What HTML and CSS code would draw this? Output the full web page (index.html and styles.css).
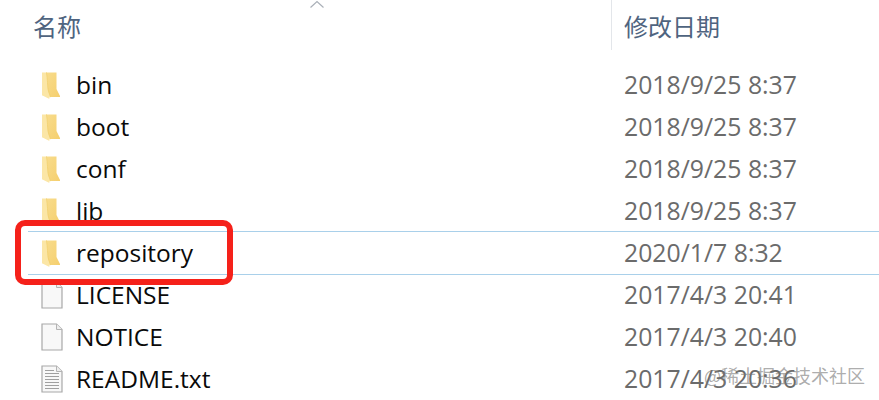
FILE: index.html
```html
<!DOCTYPE html>
<html lang="zh">
<head>
<meta charset="utf-8">
<title>文件列表</title>
<link rel="stylesheet" href="styles.css">
</head>
<body>
<svg class="defs" width="0" height="0" aria-hidden="true">
  <defs>
    <linearGradient id="fg" x1="0" y1="0" x2="1" y2="1">
      <stop offset="0" stop-color="#f8dc8c"/>
      <stop offset="1" stop-color="#f5cf6e"/>
    </linearGradient>
    <symbol id="folder" viewBox="0 0 20 28">
      <path d="M5 1.500H15.500V18L19 25V26H5Z" fill="url(#fg)"/>
      <path d="M1 1.500H5.500C6.500 8 6.500 16 7 20L9.500 26.500H8L8.500 28L1.500 24.500H1Z" fill="#fbe6a6"/>
      <path d="M5.500 1.500C6.500 8 6.500 16 7.500 20L9.500 26" fill="none" stroke="#f1d070" stroke-width=".8"/>
    </symbol>
    <symbol id="file" viewBox="0 0 22 28">
      <path d="M1 1H15.500L21 6.500V27H1Z" fill="#f8f8f8" stroke="#a8a8a8" stroke-width="1.200"/>
      <path d="M15.500 1V6.500H21" fill="#eeeeee" stroke="#b4b4b4"/>
    </symbol>
    <symbol id="text" viewBox="0 0 22 28">
      <path d="M1 1H15.500L21 6.500V27H1Z" fill="#f8f8f8" stroke="#a8a8a8" stroke-width="1.200"/>
      <path d="M15.500 1V6.500H21" fill="#eeeeee" stroke="#b4b4b4"/>
      <path d="M4 5.500H13M4 8.500H18M4 11.500H18M4 14.500H18M4 17.500H18M4 20.500H18M4 23.500H18" stroke="#a0a0a0" fill="none"/>
    </symbol>
  </defs>
</svg>

<main class="list">
  <header class="head">
    <div class="head-name">名称</div>
    <div class="head-date">修改日期</div>
    <svg class="caret" width="16" height="9" viewBox="0 0 16 9" aria-hidden="true"><path d="M1.500 7.500L8 1.500L14.500 7.500" fill="none" stroke="#aab0b8" stroke-width="1.200"/></svg>
  </header>

  <div class="row"><svg class="ico"><use href="#folder"/></svg><span class="name">bin</span><span class="date">2018/9/25 8:37</span></div>
  <div class="row"><svg class="ico"><use href="#folder"/></svg><span class="name">boot</span><span class="date">2018/9/25 8:37</span></div>
  <div class="row"><svg class="ico"><use href="#folder"/></svg><span class="name">conf</span><span class="date">2018/9/25 8:37</span></div>
  <div class="row"><svg class="ico"><use href="#folder"/></svg><span class="name">lib</span><span class="date">2018/9/25 8:37</span></div>
  <div class="row selected"><svg class="ico"><use href="#folder"/></svg><span class="name">repository</span><span class="date">2020/1/7 8:32</span></div>
  <div class="row"><svg class="ico file"><use href="#file"/></svg><span class="name">LICENSE</span><span class="date">2017/4/3 20:41</span></div>
  <div class="row"><svg class="ico file"><use href="#file"/></svg><span class="name">NOTICE</span><span class="date">2017/4/3 20:40</span></div>
  <div class="row"><svg class="ico file"><use href="#text"/></svg><span class="name">README.txt</span><span class="date">2017/4/3 20:36</span></div>

  <div class="mark"></div>
  <div class="watermark">@稀土掘金技术社区</div>
</main>
</body>
</html>
```

FILE: styles.css
```css
html, body {
  margin: 0;
  padding: 0;
  background: #ffffff;
}
body {
  width: 879px;
  height: 400px;
  overflow: hidden;
  font-family: "Open Sans", "Noto Sans CJK SC", sans-serif;
}
.defs {
  position: absolute;
}
.list {
  position: relative;
  display: flex;
  flex-direction: column;
  height: 400px;
  overflow: hidden;
}
.head {
  position: relative;
  display: grid;
  grid-template-columns: 611px 1fr;
  height: 63px;
  flex: none;
  font-family: "Noto Sans CJK SC", sans-serif;
  font-size: 24px;
  color: #4f6480;
}
.head-name {
  padding: 9px 0 0 34px;
  margin-left: -1px;
  line-height: 34px;
}
.head-date {
  padding: 9px 0 0 12px;
  line-height: 34px;
  height: 41px;
  border-left: 1px solid #e3e6ea;
}
.caret {
  position: absolute;
  left: 309px;
  top: 0;
}
.row {
  display: grid;
  grid-template-columns: 35px 548px 1fr;
  align-items: center;
  height: 42px;
  padding-left: 41px;
  flex: none;
  box-sizing: border-box;
  font-size: 24.500px;
}
.ico {
  width: 20px;
  height: 28px;
  margin-top: 1px;
}
.ico.file {
  width: 22px;
}
.name {
  color: #0a0a0a;
}
.date {
  font-size: 24.800px;
  color: #6b6b6b;
}
.selected {
  height: 44px;
  margin: 0 0 -2px 28px;
  padding: 0 0 2px 13px;
  border-top: 1px solid #a9d0ea;
  border-bottom: 1px solid #a9d0ea;
}
.mark {
  position: absolute;
  left: 15px;
  top: 220px;
  width: 218px;
  height: 65px;
  box-sizing: border-box;
  border: 6px solid #f5211a;
  border-radius: 10px;
}
.watermark {
  position: absolute;
  left: 704px;
  top: 363px;
  font-family: "Noto Sans CJK SC", sans-serif;
  font-size: 18px;
  line-height: 24px;
  color: rgba(120, 120, 120, 0.62);
  white-space: nowrap;
}
```
